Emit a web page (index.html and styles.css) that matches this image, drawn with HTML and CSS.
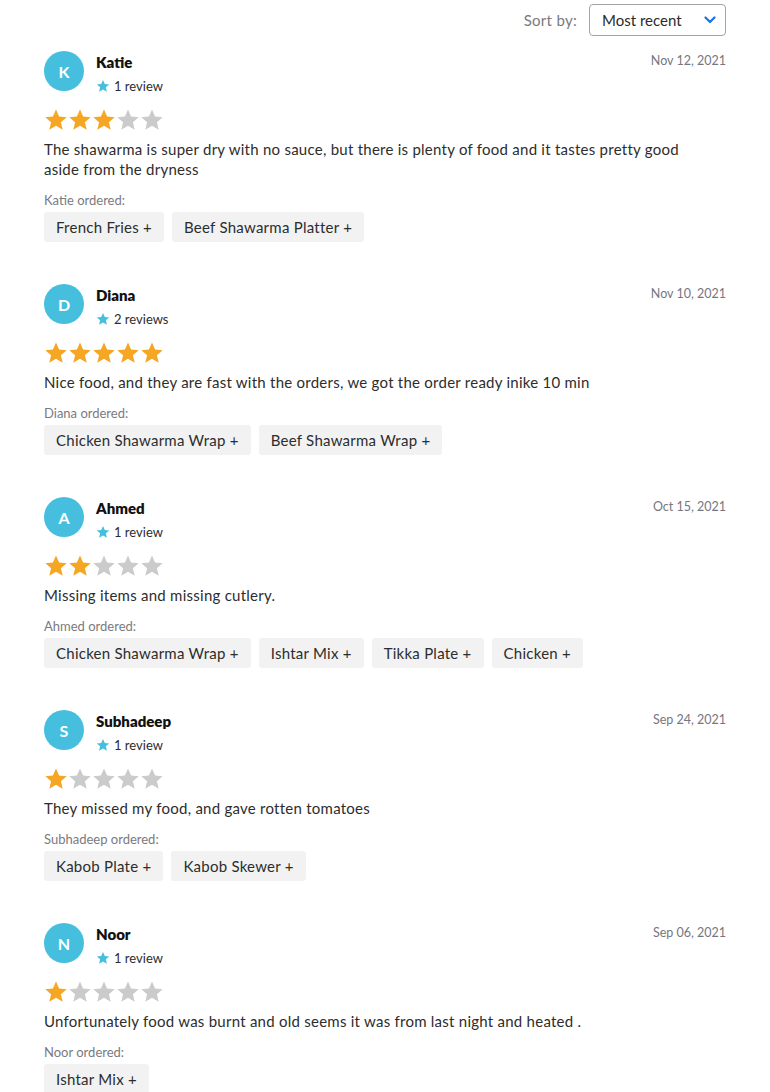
FILE: index.html
```html
<!DOCTYPE html>
<html lang="en">
<head>
<meta charset="utf-8">
<title>Reviews</title>
<link rel="stylesheet" href="styles.css">
</head>
<body>
<svg width="0" height="0" class="defs" aria-hidden="true">
  <defs>
    <symbol id="star" viewBox="0 0 24 24">
      <path d="M12 1.6l3.1 7.0 7.6.7-5.8 5.0 1.8 7.5L12 17.8l-6.7 4 1.8-7.5-5.8-5 7.6-.7z"/>
    </symbol>
  </defs>
</svg>
<div class="page">
  <div class="sortbar">
    <span class="sort-label">Sort by:</span>
    <div class="select">
      <span>Most recent</span>
      <svg class="chev" width="12" height="8" viewBox="0 0 12 8"><path d="M1.5 1.5L6 6l4.5-4.5" fill="none" stroke="#1a73e8" stroke-width="2.2" stroke-linecap="round" stroke-linejoin="round"/></svg>
    </div>
  </div>

  <div class="review">
    <div class="head">
      <div class="avatar">K</div>
      <div class="who">
        <div class="name">Katie</div>
        <div class="count"><svg class="mini"><use href="#star"/></svg>1 review</div>
      </div>
      <div class="date">Nov 12, 2021</div>
    </div>
    <div class="stars"><svg class="on"><use href="#star"/></svg><svg class="on"><use href="#star"/></svg><svg class="on"><use href="#star"/></svg><svg><use href="#star"/></svg><svg><use href="#star"/></svg></div>
    <p class="text">The shawarma is super dry with no sauce, but there is plenty of food and it tastes pretty good aside from the dryness</p>
    <div class="ordered">Katie ordered:</div>
    <div class="chips"><span class="chip">French Fries +</span><span class="chip">Beef Shawarma Platter +</span></div>
  </div>

  <div class="review">
    <div class="head">
      <div class="avatar">D</div>
      <div class="who">
        <div class="name">Diana</div>
        <div class="count"><svg class="mini"><use href="#star"/></svg>2 reviews</div>
      </div>
      <div class="date">Nov 10, 2021</div>
    </div>
    <div class="stars"><svg class="on"><use href="#star"/></svg><svg class="on"><use href="#star"/></svg><svg class="on"><use href="#star"/></svg><svg class="on"><use href="#star"/></svg><svg class="on"><use href="#star"/></svg></div>
    <p class="text">Nice food, and they are fast with the orders, we got the order ready inike 10 min</p>
    <div class="ordered">Diana ordered:</div>
    <div class="chips"><span class="chip">Chicken Shawarma Wrap +</span><span class="chip">Beef Shawarma Wrap +</span></div>
  </div>

  <div class="review">
    <div class="head">
      <div class="avatar">A</div>
      <div class="who">
        <div class="name">Ahmed</div>
        <div class="count"><svg class="mini"><use href="#star"/></svg>1 review</div>
      </div>
      <div class="date">Oct 15, 2021</div>
    </div>
    <div class="stars"><svg class="on"><use href="#star"/></svg><svg class="on"><use href="#star"/></svg><svg><use href="#star"/></svg><svg><use href="#star"/></svg><svg><use href="#star"/></svg></div>
    <p class="text">Missing items and missing cutlery.</p>
    <div class="ordered">Ahmed ordered:</div>
    <div class="chips"><span class="chip">Chicken Shawarma Wrap +</span><span class="chip">Ishtar Mix +</span><span class="chip">Tikka Plate +</span><span class="chip">Chicken +</span></div>
  </div>

  <div class="review">
    <div class="head">
      <div class="avatar">S</div>
      <div class="who">
        <div class="name">Subhadeep</div>
        <div class="count"><svg class="mini"><use href="#star"/></svg>1 review</div>
      </div>
      <div class="date">Sep 24, 2021</div>
    </div>
    <div class="stars"><svg class="on"><use href="#star"/></svg><svg><use href="#star"/></svg><svg><use href="#star"/></svg><svg><use href="#star"/></svg><svg><use href="#star"/></svg></div>
    <p class="text">They missed my food, and gave rotten tomatoes</p>
    <div class="ordered">Subhadeep ordered:</div>
    <div class="chips"><span class="chip">Kabob Plate +</span><span class="chip">Kabob Skewer +</span></div>
  </div>

  <div class="review">
    <div class="head">
      <div class="avatar">N</div>
      <div class="who">
        <div class="name">Noor</div>
        <div class="count"><svg class="mini"><use href="#star"/></svg>1 review</div>
      </div>
      <div class="date">Sep 06, 2021</div>
    </div>
    <div class="stars"><svg class="on"><use href="#star"/></svg><svg><use href="#star"/></svg><svg><use href="#star"/></svg><svg><use href="#star"/></svg><svg><use href="#star"/></svg></div>
    <p class="text">Unfortunately food was burnt and old seems it was from last night and heated .</p>
    <div class="ordered">Noor ordered:</div>
    <div class="chips"><span class="chip">Ishtar Mix +</span></div>
  </div>
</div>
</body>
</html>
```

FILE: styles.css
```css
html, body {
  margin: 0;
  padding: 0;
  background: #ffffff;
}
body {
  font-family: Lato, "Open Sans", sans-serif;
  color: #2d2d2d;
  overflow: hidden;
}
.defs {
  position: absolute;
  width: 0;
  height: 0;
}
.page {
  padding: 4px 44px 0 44px;
}
.sortbar {
  display: flex;
  justify-content: flex-end;
  align-items: center;
  gap: 12px;
  height: 32px;
}
.sort-label {
  font-size: 15px;
  color: #7a7a80;
  letter-spacing: 0.3px;
}
.select {
  box-sizing: border-box;
  width: 137px;
  height: 32px;
  border: 1px solid #a4a4a8;
  border-radius: 4px;
  display: flex;
  align-items: center;
  justify-content: space-between;
  padding: 0 9px 0 12px;
  font-size: 15px;
  color: #2b2b2b;
}
.chev {
  display: block;
}
.review {
  margin-top: 15px;
  padding-bottom: 42px;
}
.review + .review {
  margin-top: 0;
}
.head {
  display: flex;
  align-items: flex-start;
  height: 40px;
}
.avatar {
  width: 40px;
  height: 40px;
  border-radius: 50%;
  background: #45bfdd;
  color: #ffffff;
  font-weight: 700;
  font-size: 16px;
  display: flex;
  align-items: center;
  justify-content: center;
  flex: none;
}
.who {
  margin-left: 12px;
  flex: 1;
}
.name {
  font-weight: 800;
  font-size: 15px;
  line-height: 20px;
  color: #111111;
  margin-top: 1px;
}
.count {
  display: flex;
  align-items: center;
  gap: 4px;
  font-size: 13px;
  line-height: 18px;
  color: #2d2d2d;
  margin-top: 5px;
}
.mini {
  width: 14px;
  height: 14px;
  fill: #45bfdd;
}
.date {
  font-size: 12.5px;
  line-height: 18px;
  color: #767680;
  margin-top: 1px;
}
.stars {
  display: flex;
  margin-top: 17px;
  height: 24px;
}
.stars svg {
  width: 24px;
  height: 24px;
  fill: #cbcbcb;
}
.stars svg.on {
  fill: #f5a623;
}
.text {
  margin: 7px 0 0 0;
  font-size: 15px;
  line-height: 20px;
  color: #2d2d2d;
  letter-spacing: 0.25px;
  padding-right: 40px;
}
.ordered {
  margin-top: 13px;
  font-size: 13px;
  line-height: 16px;
  color: #7a7a80;
}
.chips {
  display: flex;
  flex-wrap: wrap;
  gap: 8px;
  margin-top: 4px;
}
.chip {
  background: #f2f2f3;
  border-radius: 3px;
  height: 30px;
  line-height: 30px;
  padding: 0 12px;
  font-size: 15px;
  letter-spacing: 0.25px;
  color: #2d2d2d;
}
```
